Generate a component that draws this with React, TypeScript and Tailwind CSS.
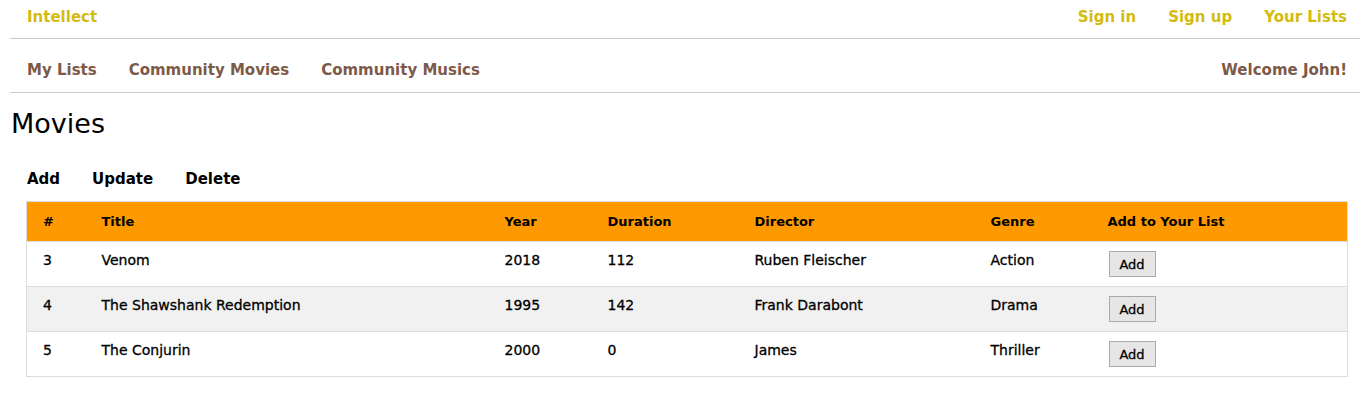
const movies = [
  { id: 3, title: "Venom", year: "2018", duration: "112", director: "Ruben Fleischer", genre: "Action" },
  { id: 4, title: "The Shawshank Redemption", year: "1995", duration: "142", director: "Frank Darabont", genre: "Drama" },
  { id: 5, title: "The Conjurin", year: "2000", duration: "0", director: "James", genre: "Thriller" },
];

const nav = "font-['DejaVu_Sans',sans-serif] font-bold text-[15px] leading-[20px]";
const cell = "px-4 pt-[9px] align-top leading-[18px] [-webkit-text-stroke:0.3px_black]";

export default function App() {
  return (
    <div className="min-h-[403px] bg-white pl-[10px] font-['DejaVu_Sans',sans-serif]">
      <header className="flex h-[39px] items-start justify-between border-b border-[#cccccc] pl-[17px] pr-[13px] pt-[7px]">
        <a className={`${nav} text-[#d4bb10]`}>Intellect</a>
        <nav className={`${nav} flex gap-8 text-[#d4bb10]`}>
          <a>Sign in</a>
          <a>Sign up</a>
          <a>Your Lists</a>
        </nav>
      </header>

      <div className="flex h-[54px] items-start justify-between border-b border-[#cccccc] pl-[17px] pr-[13px] pt-[21px]">
        <nav className={`${nav} flex gap-8 text-[#7d5a48]`}>
          <a>My Lists</a>
          <a>Community Movies</a>
          <a>Community Musics</a>
        </nav>
        <span className={`${nav} text-[#7d5a48]`}>Welcome John!</span>
      </div>

      <h1 className="mt-[15px] pl-[1px] text-[27px] leading-[32px] text-black">Movies</h1>

      <div className="mt-[29px] flex gap-8 pl-[17px] text-[15px] font-bold leading-[20px] text-black">
        <button>Add</button>
        <button>Update</button>
        <button>Delete</button>
      </div>

      <div className="ml-[16px] mr-[12px] mt-[12px]">
        <table className="w-full border-collapse border border-[#dddddd] text-left text-[14px] text-black">
          <thead>
            <tr className="bg-[#ff9900] text-[13px]">
              <th className="h-[40px] w-[59px] px-4 font-bold">#</th>
              <th className="w-[403px] px-4 font-bold">Title</th>
              <th className="w-[103px] px-4 font-bold">Year</th>
              <th className="w-[147px] px-4 font-bold">Duration</th>
              <th className="w-[236px] px-4 font-bold">Director</th>
              <th className="w-[117px] px-4 font-bold">Genre</th>
              <th className="px-4 font-bold">Add to Your List</th>
            </tr>
          </thead>
          <tbody>
            {movies.map((m, i) => (
              <tr key={m.id} className={`border-t border-[#dddddd] ${i === 1 ? "bg-[#f1f1f1]" : "bg-white"}`}>
                <td className={`${cell} h-[45px]`}>{m.id}</td>
                <td className={cell}>{m.title}</td>
                <td className={cell}>{m.year}</td>
                <td className={cell}>{m.duration}</td>
                <td className={cell}>{m.director}</td>
                <td className={cell}>{m.genre}</td>
                <td className={cell}>
                  <button className="ml-[1px] h-[26px] w-[47px] border border-[#aaaaaa] bg-[#e6e6e6] text-[13px] leading-none text-black">
                    Add
                  </button>
                </td>
              </tr>
            ))}
          </tbody>
        </table>
      </div>
    </div>
  );
}
